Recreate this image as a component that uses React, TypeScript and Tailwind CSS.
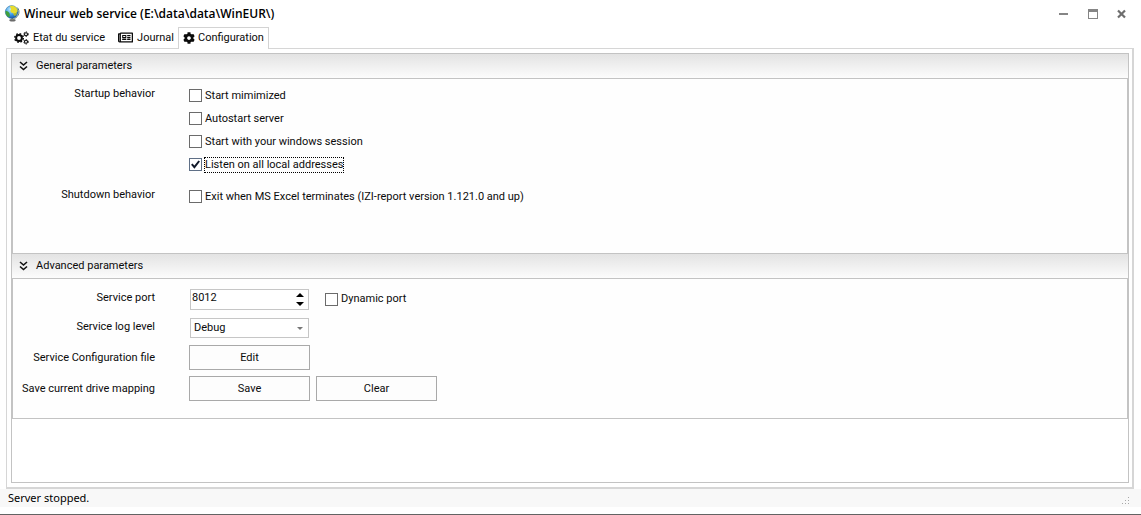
import { useState, type ReactNode } from "react";
import { FaCog, FaRegNewspaper } from "react-icons/fa";

function GlobeIcon() {
  return (
    <svg viewBox="0 0 16 17" className="h-[17px] w-4" aria-hidden="true">
      <defs>
        <radialGradient id="sea" cx="0.4" cy="0.3" r="0.8">
          <stop offset="0" stopColor="#c4ecff" />
          <stop offset="0.5" stopColor="#3f9fe8" />
          <stop offset="1" stopColor="#0c3f96" />
        </radialGradient>
      </defs>
      <ellipse cx="8.500" cy="15.300" rx="3.200" ry="1.200" fill="#6b6b6b" />
      <path d="M7.500 13h2v2h-2z" fill="#8a8a6a" />
      <path d="M13.400 2.600c3 3.600 1.600 9-3 10.900" fill="none" stroke="#5f7f6f" strokeWidth="1" />
      <circle cx="7.700" cy="7" r="6.400" fill="url(#sea)" stroke="#2c6a9a" strokeWidth="0.500" />
      <path d="M6 1C8 .4 10.500.8 12 2.400c1.600 1.500 1.900 3.600 1.300 4.700-1 .3-1.300 1.600-2.500 3-1 .2-1.400-1-1.600-2.200-1.600.1-3-.9-2.800-2.400.2-1 .8-1.300.5-2.100C6.500 2.600 6 2 6 1z" fill="#e8dc2c" />
      <path d="M1.500 6.200c1.500-.5 2.800.4 3.600 1.500.9 1 1 2.600.2 4.600C2.700 11.600 1.200 9 1.500 6.200z" fill="#3fa03c" />
      <path d="M9.500 8.200c1.500.2 2.800-.4 3.700-1-.1 1.900-1 3.500-2.500 3.700-.8-.6-1-1.700-1.200-2.700z" fill="#a8b832" />
    </svg>
  );
}

function CogsIcon() {
  return (
    <svg viewBox="0 0 15 14" className="h-[14px] w-[15px]" fill="none" stroke="currentColor" aria-hidden="true">
      <circle cx="5" cy="7" r="2.900" strokeWidth="2" />
      <circle cx="5" cy="7" r="4.300" strokeWidth="1.400" strokeDasharray="1.690 1.690" />
      <circle cx="12" cy="3.200" r="1.500" strokeWidth="1.100" />
      <circle cx="12" cy="3.200" r="2.300" strokeWidth="0.900" strokeDasharray="1.200 1.200" />
      <circle cx="12" cy="10.800" r="1.500" strokeWidth="1.100" />
      <circle cx="12" cy="10.800" r="2.300" strokeWidth="0.900" strokeDasharray="1.200 1.200" />
    </svg>
  );
}

function ChevronsIcon() {
  return (
    <svg viewBox="0 0 9 10" className="h-[10px] w-[9px]" fill="none" stroke="#111" strokeWidth="1.600" aria-hidden="true">
      <path d="M1 1l3.500 3L8 1M1 5.500l3.500 3L8 5.500" />
    </svg>
  );
}

function Check({ label, initial = false, focused = false }: { label: string; initial?: boolean; focused?: boolean }) {
  const [on, setOn] = useState(initial);
  return (
    <label className="flex h-[23px] items-center gap-0.5">
      <span className="grid size-[13px] place-items-center">
        <input
          type="checkbox"
          checked={on}
          onChange={(e) => setOn(e.target.checked)}
          className="peer col-start-1 row-start-1 size-[13px] appearance-none border border-[#6b6b6b] bg-white checked:border-[#5f6f86]"
        />
        <svg viewBox="0 0 9 9" className="pointer-events-none z-10 col-start-1 row-start-1 hidden size-[9px] peer-checked:block" fill="none" stroke="#101828" strokeWidth="2" aria-hidden="true">
          <path d="M.8 4.200l2.600 2.900L8.200 1" />
        </svg>
      </span>
      <span className={focused ? "border border-dotted border-black leading-[14px]" : "border border-transparent leading-[14px]"}>
        {label}
      </span>
    </label>
  );
}

function Section({ title, children }: { title: string; children: ReactNode }) {
  const [open, setOpen] = useState(true);
  return (
    <section>
      <button
        type="button"
        aria-expanded={open}
        onClick={() => setOpen(!open)}
        className="flex h-6 w-full items-center gap-2 bg-linear-to-b from-[#e3e3e3] to-[#fcfcfc] pl-[7px] text-left"
      >
        <ChevronsIcon />
        {title}
      </button>
      {open && <div className="border border-[#c3c3c3] bg-[#fefefe]">{children}</div>}
    </section>
  );
}

const tab = "flex h-[21px] items-center gap-1";
const action = "h-[25px] w-[121px] border border-[#a9a9a9] bg-[#fdfdfd] text-center";
const rowLabel = "w-[142px] shrink-0 text-right";

export default function App() {
  const [port, setPort] = useState(8012);
  return (
    <div className="flex min-h-screen flex-col border-b border-[#636363] bg-white font-['Roboto','Liberation_Sans',sans-serif] text-[11px] leading-[14px] text-[#0b0b0b]">
      <header className="flex h-[27px] items-center pl-1">
        <GlobeIcon />
        <h1 className="ml-1 flex-1 font-['Open_Sans','Noto_Sans',sans-serif] text-xs font-semibold text-black">
          Wineur web service (E:\data\data\WinEUR\)
        </h1>
        <div className="flex gap-[9px] pr-[9px] text-[#858585]">
          <button type="button" aria-label="Minimize" className="grid size-5 place-items-center">
            <svg viewBox="0 0 10 10" className="size-[10px]" fill="currentColor"><path d="M0 4h9v2H0z" /></svg>
          </button>
          <button type="button" aria-label="Maximize" className="grid size-5 place-items-center">
            <svg viewBox="0 0 10 10" className="size-[10px]" fill="currentColor"><path d="M0 0h10v10H0zM1 3v6h8V3z" fillRule="evenodd" /></svg>
          </button>
          <button type="button" aria-label="Close" className="grid size-5 place-items-center text-[#6e6e6e]">
            <svg viewBox="0 0 10 10" className="size-[10px]" fill="none" stroke="currentColor" strokeWidth="2.200"><path d="M1 1.500l7 7M8 1.500l-7 7" /></svg>
          </button>
        </div>
      </header>

      <div className="flex flex-1 flex-col pr-[7px] pl-1.5">
        <nav role="tablist" className="z-10 -mb-px flex h-[22px] items-start">
          <button type="button" role="tab" aria-selected="false" className={`${tab} pl-2`}>
            <CogsIcon />
            Etat du service
          </button>
          <button type="button" role="tab" aria-selected="false" className={`${tab} pl-[13px]`}>
            <FaRegNewspaper className="size-[15px]" />
            Journal
          </button>
          <button type="button" role="tab" aria-selected="true" className="ml-1 flex h-[22px] items-center gap-[3px] border border-b-0 border-[#d3d3d3] bg-white px-1 pb-0.5">
            <FaCog className="size-3" />
            Configuration
          </button>
        </nav>

        <main className="flex flex-1 flex-col border border-r-2 border-b-2 border-[#d6d6d6] p-1 pr-[3px]">
          <div className="flex-1 border border-[#c3c3c3]">
            <Section title="General parameters">
              <div className="flex flex-col gap-[9px] pt-[5px] pb-[45px]">
                <div className="flex gap-[34px]">
                  <div className={`${rowLabel} pt-[3px]`}>Startup behavior</div>
                  <div>
                    <Check label="Start mimimized" />
                    <Check label="Autostart server" />
                    <Check label="Start with your windows session" />
                    <Check label="Listen on all local addresses" initial focused />
                  </div>
                </div>
                <div className="flex gap-[34px]">
                  <div className={`${rowLabel} pt-[3px]`}>Shutdown behavior</div>
                  <Check label="Exit when MS Excel terminates (IZI-report version 1.121.0 and up)" />
                </div>
              </div>
            </Section>

            <Section title="Advanced parameters">
              <div className="flex flex-col gap-1.5 pt-[10px] pb-[17px]">
                <div className="flex h-[23px] items-start gap-[35px]">
                  <label htmlFor="port" className={`${rowLabel} pt-0.5`}>Service port</label>
                  <div className="flex h-5 items-center gap-4">
                    <div className="flex h-[21px] w-[119px] border border-[#c6c6c6] bg-white pl-px">
                      <input
                        id="port"
                        inputMode="numeric"
                        value={port}
                        onChange={(e) => setPort(Number(e.target.value) || 0)}
                        className="min-w-0 flex-1 pb-[3px] outline-none"
                      />
                      <div className="flex w-[17px] flex-col items-center justify-center gap-[5px]">
                        <button type="button" aria-label="Increase port" onClick={() => setPort(port + 1)}>
                          <svg viewBox="0 0 8 4" className="block h-1 w-2"><path d="M0 4l4-4 4 4z" /></svg>
                        </button>
                        <button type="button" aria-label="Decrease port" onClick={() => setPort(port - 1)}>
                          <svg viewBox="0 0 8 4" className="block h-1 w-2"><path d="M0 0l4 4 4-4z" /></svg>
                        </button>
                      </div>
                    </div>
                    <Check label="Dynamic port" />
                  </div>
                </div>
                <div className="flex h-[21px] items-start gap-[35px]">
                  <label htmlFor="level" className={`${rowLabel} pt-0.5`}>Service log level</label>
                  <div className="grid w-[119px] items-center">
                    <select id="level" defaultValue="Debug" className="col-start-1 row-start-1 h-5 appearance-none border border-[#c6c6c6] bg-white pr-5 pl-[3px] outline-none">
                      <option>Debug</option>
                      <option>Info</option>
                      <option>Error</option>
                    </select>
                    <svg viewBox="0 0 6 3" className="pointer-events-none col-start-1 row-start-1 mr-[6px] h-[3px] w-[6px] justify-self-end" fill="#777" aria-hidden="true"><path d="M0 0h6L3 3z" /></svg>
                  </div>
                </div>
                <div className="flex items-center gap-[34px]">
                  <div className={rowLabel}>Service Configuration file</div>
                  <button type="button" className={action}>Edit</button>
                </div>
                <div className="flex items-center gap-[34px]">
                  <div className={rowLabel}>Save current drive mapping</div>
                  <div className="flex gap-1.5">
                    <button type="button" className={action}>Save</button>
                    <button type="button" className={action}>Clear</button>
                  </div>
                </div>
              </div>
            </Section>
          </div>
        </main>
      </div>

      <footer className="mb-[7px] flex h-[18px] items-center justify-between bg-[#f8f8f8] pr-[11px] pl-2 font-['Noto_Sans',sans-serif] text-black">
        Server stopped.
        <svg viewBox="0 0 8 8" className="mt-[5px] size-2" fill="#a8a8a8" aria-hidden="true">
          <path d="M6 0h1v1H6zM3 3h1v1H3zM6 3h1v1H6zM0 6h1v1H0zM3 6h1v1H3zM6 6h1v1H6z" />
        </svg>
      </footer>
    </div>
  );
}
